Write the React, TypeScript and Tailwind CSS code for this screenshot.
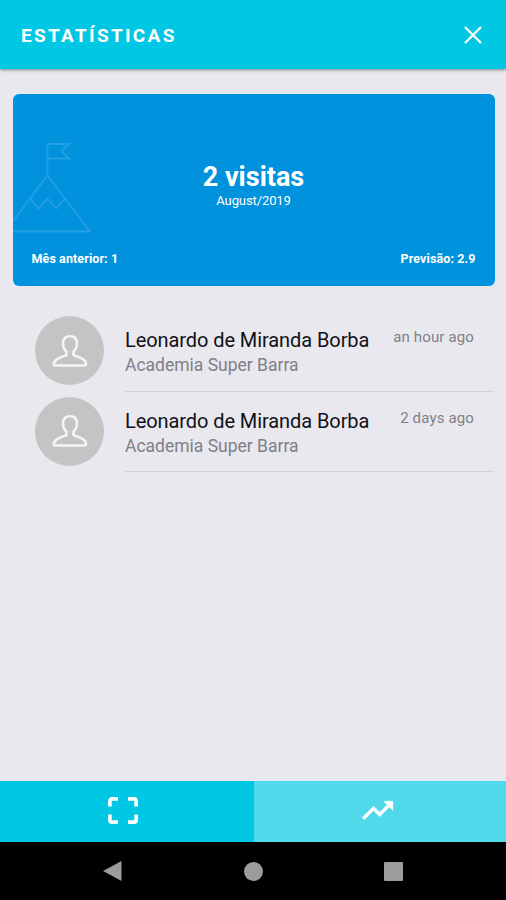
const visits = [
  { name: "Leonardo de Miranda Borba", place: "Academia Super Barra", when: "an hour ago" },
  { name: "Leonardo de Miranda Borba", place: "Academia Super Barra", when: "2 days ago" },
];

function Header() {
  return (
    <header className="z-10 flex h-[69px] shrink-0 items-center justify-between bg-[#00c7e4] pt-[2px] pr-[24px] pl-[21px] text-white shadow-[0_1px_3px_rgba(0,0,0,0.45)]">
      <h1 className="pt-[2px] text-[19px] font-bold tracking-[2.3px]">ESTATÍSTICAS</h1>
      <svg className="mb-[2px]" width="18" height="18" viewBox="0 0 18 18" fill="none" stroke="currentColor" strokeWidth="2.3">
        <path d="M1 1 17 17M17 1 1 17" />
      </svg>
    </header>
  );
}

function Mountain() {
  return (
    <svg className="absolute top-[46px] left-0" width="82" height="96" viewBox="13 140 82 96" fill="none" stroke="#249fe3" strokeWidth="1.8">
      <path d="M47.5 175V144H69L61.5 151.200L69 158.500H48M47.500 175.500 5 231.500H90L47.500 175.500M30.500 198.500 38.500 208.500 47.500 198.500 56.500 208.500 65 198.500" />
    </svg>
  );
}

function SummaryCard() {
  return (
    <section className="relative mt-[25px] ml-[12.500px] flex h-[192px] w-[482px] shrink-0 flex-col overflow-hidden rounded-[6px] bg-[#0092dd] text-white">
      <Mountain />
      <div className="flex flex-col items-center pt-[67px]">
        <strong className="text-[27px] leading-[32px] font-bold">2 visitas</strong>
        <span className="text-[13px] leading-[16px] tracking-[-0.1px]">August/2019</span>
      </div>
      <div className="mt-auto flex justify-between px-[19px] pb-[19px] text-[12.500px] leading-[16px] font-bold tracking-[0.1px]">
        <span>Mês anterior: 1</span>
        <span>Previsão: 2.9</span>
      </div>
    </section>
  );
}

function Avatar() {
  return (
    <div className="mt-[5px] flex size-[69px] shrink-0 items-center justify-center rounded-full bg-[#c4c4c4]">
      <svg width="38" height="38" viewBox="0 0 38 38" fill="none" stroke="#f5f5f5" strokeWidth="2.5" strokeLinejoin="round">
        <path d="M15.500 19.500C13 17.500 12 14.500 12 11.300C12 6.800 14.700 4.200 19 4.200S26 6.800 26 11.300C26 14.500 25 17.500 22.500 19.500V23.200C27 25.200 35.200 26.500 35.200 32.300Q35.200 33.500 34 33.500H4Q2.800 33.500 2.800 32.300C2.800 26.500 11 25.200 15.500 23.200Z" />
      </svg>
    </div>
  );
}

export default function App() {
  return (
    <div className="flex h-[900px] w-[506px] flex-col overflow-hidden bg-[#e9e8ef] font-['Roboto',sans-serif]">
      <Header />
      <SummaryCard />
      <ul className="mt-[25px] flex-1">
        {visits.map((visit) => (
          <li key={visit.when} className="flex h-[80.500px] pl-[35px]">
            <Avatar />
            <div className="mr-[12px] ml-[21px] flex flex-1 items-start justify-between border-b border-[#d3d2d9] pt-[17px] pr-[20px]">
              <div className="whitespace-nowrap">
                <p className="text-[20px] leading-[25px] tracking-[-0.080px] text-[#111116]">{visit.name}</p>
                <p className="text-[17.500px] leading-[25px] text-[#808086]">{visit.place}</p>
              </div>
              <time className="text-[15px] leading-[18px] tracking-[0.15px] whitespace-nowrap text-[#808086]">{visit.when}</time>
            </div>
          </li>
        ))}
      </ul>
      <nav className="flex h-[61px] shrink-0 text-white">
        <button className="flex w-[254px] items-center justify-center bg-[#00c7e4] pr-[8px] pb-[3px]">
          <svg width="30" height="27" viewBox="0 0 30 27" fill="none" stroke="currentColor" strokeWidth="3.6" strokeLinejoin="round">
            <path d="M10 1.900H4Q1.900 1.900 1.900 4V9.500M20 1.900H26Q28.100 1.900 28.100 4V9.500M1.900 17.500V23Q1.900 25.100 4 25.100H10M28.100 17.500V23Q28.100 25.100 26 25.100H20" />
          </svg>
        </button>
        <button className="flex flex-1 items-center justify-center bg-[#50d9ea] pr-[6px] pb-[3px]">
          <svg width="37" height="37" viewBox="0 0 24 24" fill="currentColor" stroke="currentColor" strokeWidth="0.3">
            <path d="m16 6 2.290 2.290-4.880 4.880-4-4L2 16.590 3.410 18l6-6 4 4 6.300-6.290L22 12V6z" />
          </svg>
        </button>
      </nav>
      <footer className="flex h-[58px] shrink-0 items-center justify-between bg-black pr-[103px] pl-[102px] text-[#9c9c9c]">
        <svg width="20" height="22" viewBox="0 0 20 22" fill="currentColor">
          <path d="M1 11 19.500 1V21Z" />
        </svg>
        <span className="size-[19px] rounded-full bg-[#9c9c9c]" />
        <span className="size-[19px] rounded-[1px] bg-[#9c9c9c]" />
      </footer>
    </div>
  );
}
